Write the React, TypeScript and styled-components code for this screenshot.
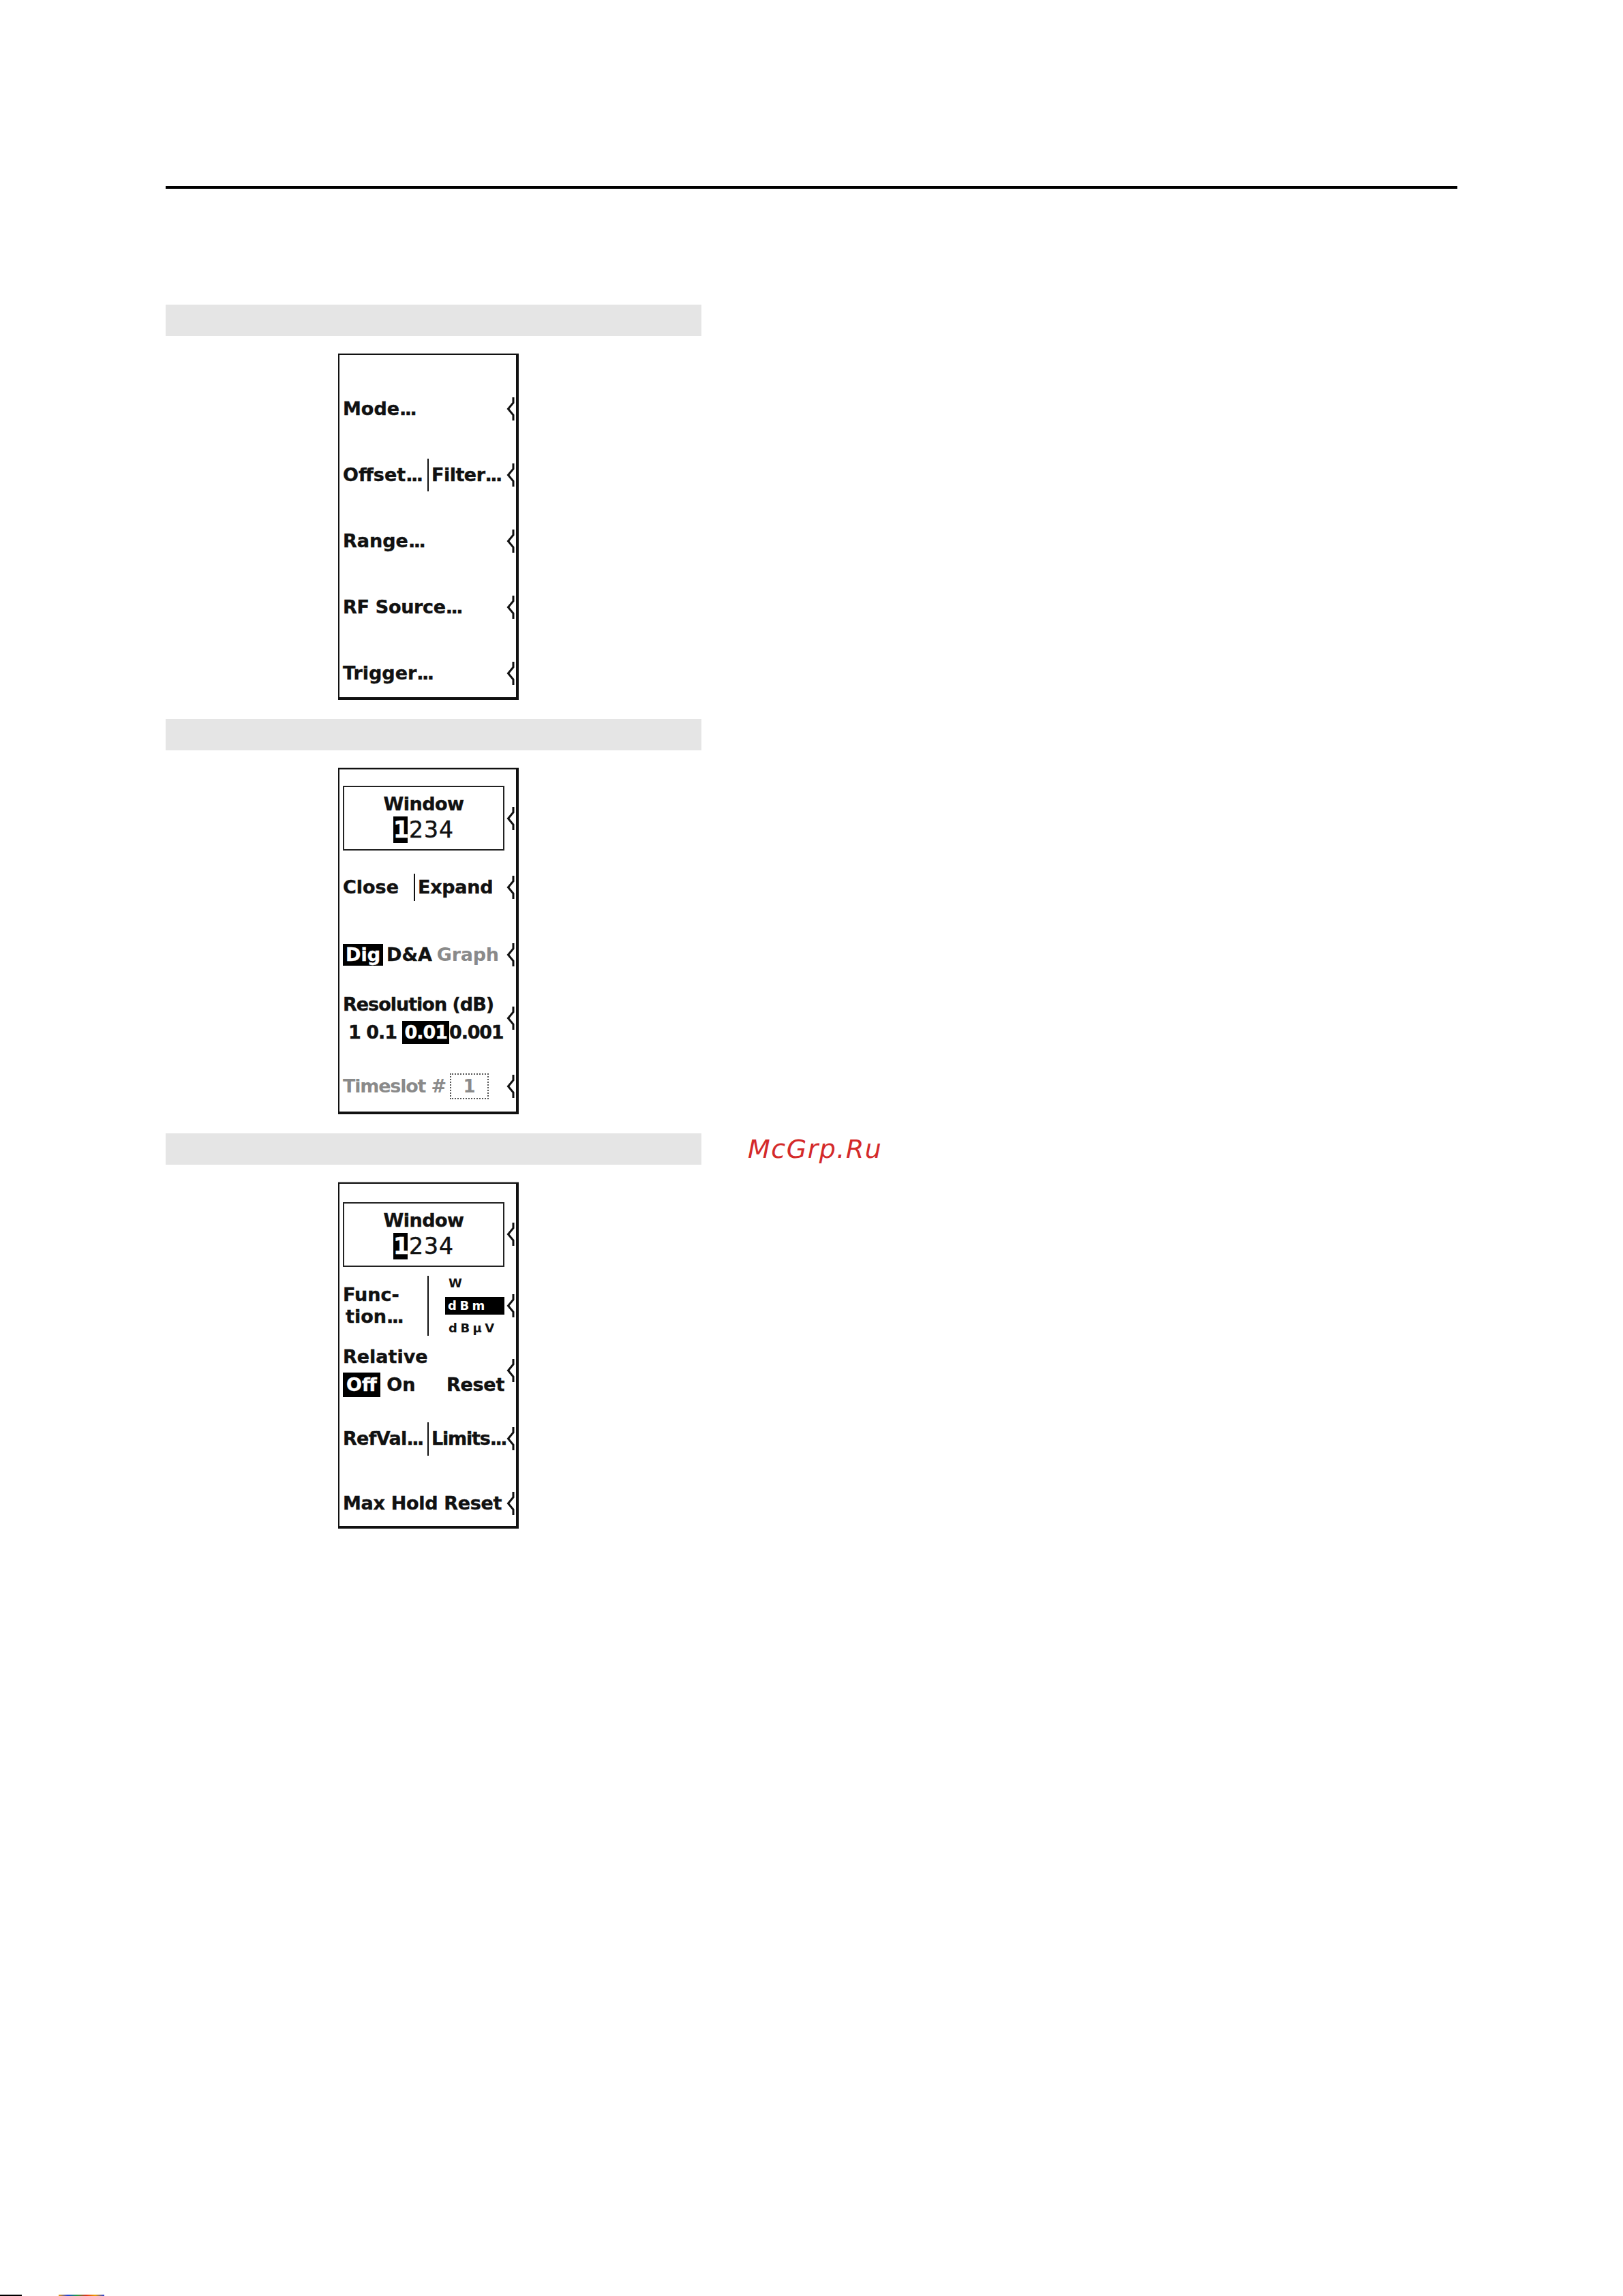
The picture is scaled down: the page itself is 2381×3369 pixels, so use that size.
import React from 'react';
import styled, { createGlobalStyle } from 'styled-components';

const GlobalStyle = createGlobalStyle`
  html, body {
    margin: 0;
    padding: 0;
    background: #fff;
  }
  body {
    font-family: 'DejaVu Sans', 'Liberation Sans', sans-serif;
    color: #111;
  }
`;

const Page = styled.div`
  width: 2381px;
  height: 3369px;
  box-sizing: border-box;
  padding: 273px 0 0 243px;
  display: flex;
  flex-direction: column;
  overflow: hidden;
`;

const TopRule = styled.div`
  width: 1895px;
  height: 4px;
  background: #000;
  margin-bottom: 170px;
`;

const Section = styled.section`
  display: flex;
  flex-direction: column;
  gap: 26px;
  margin-bottom: 28px;
`;

const SectionHead = styled.div`
  display: flex;
  align-items: center;
  height: 46px;
`;

const HeadBar = styled.div`
  width: 786px;
  height: 46px;
  background: #e5e5e5;
`;

const Watermark = styled.span`
  margin-left: 68px;
  font-family: 'DejaVu Sans', sans-serif;
  font-style: oblique;
  font-size: 38px;
  letter-spacing: 1.5px;
  color: #d42a2a;
`;

const Panel = styled.div<{ $top: number }>`
  width: 265px;
  height: 508px;
  box-sizing: border-box;
  margin-left: 253px;
  border: 2px solid #111;
  border-right-width: 4px;
  border-bottom-width: 4px;
  box-shadow: 0 -1px 0 #bbb;
  padding: ${(p) => p.$top}px 2px 0 5px;
  display: flex;
  flex-direction: column;
`;

const Slot = styled.div<{ $h: number }>`
  height: ${(p) => p.$h}px;
  flex: none;
  display: flex;
  align-items: center;
`;

const SlotBody = styled.div`
  width: 237px;
  flex: none;
  display: flex;
  align-items: center;
`;

const ArrowSvg = styled.svg`
  flex: none;
  margin-left: 3px;
  display: block;
`;

const Label = styled.span<{ $ls?: number; $lh?: number }>`
  font-weight: bold;
  font-size: 27px;
  line-height: ${(p) => p.$lh ?? 30}px;
  white-space: nowrap;
  letter-spacing: ${(p) => p.$ls ?? 0}px;
  -webkit-text-stroke: 0.4px currentColor;
`;

const Dots = styled.span`
  letter-spacing: -2.5px;
`;

const Dim = styled(Label)`
  color: #8a8a8a;
  -webkit-text-stroke: 0;
`;

const Inv = styled.span<{ $px?: number; $h?: number }>`
  display: inline-block;
  background: #000;
  color: #fff;
  padding: 0 ${(p) => p.$px ?? 4}px;
  height: ${(p) => p.$h ?? 30}px;
  line-height: ${(p) => p.$h ?? 30}px;
`;

const Split = styled.div`
  display: flex;
  align-items: center;
  width: 100%;
`;

const Cell = styled.div<{ $w?: number }>`
  ${(p) => (p.$w ? `width: ${p.$w}px; flex: none;` : 'flex: 1;')}
  display: flex;
  align-items: center;
`;

const Divider = styled.div<{ $h: number }>`
  width: 2px;
  height: ${(p) => p.$h}px;
  background: #111;
  flex: none;
  margin-right: 4px;
`;

const WinBox = styled.div`
  width: 237px;
  height: 95px;
  box-sizing: border-box;
  border: 2px solid #222;
  padding-top: 4px;
  display: flex;
  flex-direction: column;
  align-items: center;
  justify-content: center;
  gap: 6px;
`;

const WinDigits = styled.div`
  display: flex;
  align-items: center;
  font-size: 33px;
  line-height: 39px;
  letter-spacing: 1px;
  -webkit-text-stroke: 0.5px currentColor;
`;

const WinSel = styled.span`
  display: inline-block;
  width: 21px;
  height: 39px;
  background: #000;
  color: #fff;
  font-weight: bold;
  text-align: center;
  letter-spacing: 0;
  margin-right: 2px;
`;

const Gap = styled.span<{ $w: number }>`
  display: inline-block;
  width: ${(p) => p.$w}px;
`;

const DotBox = styled.span`
  display: inline-flex;
  align-items: center;
  justify-content: center;
  width: 57px;
  height: 38px;
  box-sizing: border-box;
  border: 2px dotted #555;
  margin-left: 6px;
  font-weight: bold;
  font-size: 26px;
  color: #8a8a8a;
`;

const Stack = styled.div`
  display: flex;
  flex-direction: column;
  width: 100%;
`;

const Line = styled.div<{ $indent?: number; $h: number }>`
  display: flex;
  align-items: center;
  height: ${(p) => p.$h}px;
  padding-left: ${(p) => p.$indent ?? 0}px;
`;

const Spread = styled(Line)`
  justify-content: space-between;
`;

const UnitCol = styled.div`
  display: flex;
  flex-direction: column;
  align-items: flex-start;
  gap: 10px;
  padding-left: 20px;
`;

const Unit = styled.span<{ $inv?: boolean }>`
  font-weight: bold;
  font-size: 18px;
  letter-spacing: 4.5px;
  line-height: ${(p) => (p.$inv ? 26 : 20)}px;
  padding-left: ${(p) => (p.$inv ? 4 : 5)}px;
  ${(p) => (p.$inv ? 'background:#000;color:#fff;width:87px;box-sizing:border-box;' : '')}
`;

const Footer = styled.div`
  margin-top: auto;
  margin-left: -243px;
  height: 2px;
  display: flex;
  gap: 54px;
`;

const FootBit = styled.span<{ $w: number; $bg: string }>`
  width: ${(p) => p.$w}px;
  background: ${(p) => p.$bg};
`;

const Arrow = () => (
  <ArrowSvg viewBox="0 0 12 36" width={12} height={36}>
    <path d="M10 1 V9 L2.5 18 L10 27 V35" fill="none" stroke="#111" strokeWidth={3} />
  </ArrowSvg>
);

const Key = ({ h, children }: { h: number; children: React.ReactNode }) => (
  <Slot $h={h}>
    <SlotBody>{children}</SlotBody>
    <Arrow />
  </Slot>
);

const WindowKey = ({ h }: { h: number }) => (
  <Key h={h}>
    <WinBox>
      <Label $lh={24} $ls={-0.5}>
        Window
      </Label>
      <WinDigits>
        <WinSel>1</WinSel>234
      </WinDigits>
    </WinBox>
  </Key>
);

const App = () => {
  return (
    <>
      <GlobalStyle />
      <Page>
        <TopRule />

        <Section>
          <SectionHead>
            <HeadBar />
          </SectionHead>
          <Panel $top={30}>
            <Key h={97}>
              <Label>
                Mode<Dots>...</Dots>
              </Label>
            </Key>
            <Key h={97}>
              <Split>
                <Cell $w={124}>
                  <Label>
                    Offset<Dots>...</Dots>
                  </Label>
                </Cell>
                <Divider $h={48} />
                <Cell>
                  <Label $ls={-0.5}>
                    Filter<Dots>...</Dots>
                  </Label>
                </Cell>
              </Split>
            </Key>
            <Key h={97}>
              <Label>
                Range<Dots>...</Dots>
              </Label>
            </Key>
            <Key h={97}>
              <Label $ls={-0.3}>
                RF Source<Dots>...</Dots>
              </Label>
            </Key>
            <Key h={97}>
              <Label>
                Trigger<Dots>...</Dots>
              </Label>
            </Key>
          </Panel>
        </Section>

        <Section>
          <SectionHead>
            <HeadBar />
          </SectionHead>
          <Panel $top={22}>
            <WindowKey h={99} />
            <Key h={104}>
              <Split>
                <Cell $w={104}>
                  <Label>Close</Label>
                </Cell>
                <Divider $h={40} />
                <Cell>
                  <Label $ls={-0.3}>Expand</Label>
                </Cell>
              </Split>
            </Key>
            <Key h={94}>
              <Label>
                <Inv $px={4} $h={32}>Dig</Inv>
              </Label>
              <Gap $w={5} />
              <Label>D&amp;A</Label>
              <Gap $w={7} />
              <Dim $ls={-0.3}>Graph</Dim>
            </Key>
            <Key h={92}>
              <Stack>
                <Line $h={41}>
                  <Label $ls={-1}>Resolution (dB)</Label>
                </Line>
                <Line $h={41} $indent={8}>
                  <Label $ls={-1}>1 0.1&nbsp;</Label>
                  <Label $ls={-1}>
                    <Inv $px={3} $h={34}>0.01</Inv>
                  </Label>
                  <Label $ls={-1.2}>0.001</Label>
                </Line>
              </Stack>
            </Key>
            <Key h={108}>
              <Dim $ls={-1.2}>Timeslot #</Dim>
              <DotBox>1</DotBox>
            </Key>
          </Panel>
        </Section>

        <Section>
          <SectionHead>
            <HeadBar />
            <Watermark>McGrp.Ru</Watermark>
          </SectionHead>
          <Panel $top={25}>
            <WindowKey h={98} />
            <Key h={112}>
              <Split>
                <Cell $w={124}>
                  <Stack>
                    <Line $h={32}>
                      <Label>Func-</Label>
                    </Line>
                    <Line $h={32} $indent={4}>
                      <Label>
                        tion<Dots>...</Dots>
                      </Label>
                    </Line>
                  </Stack>
                </Cell>
                <Divider $h={88} />
                <Cell>
                  <UnitCol>
                    <Unit>W</Unit>
                    <Unit $inv>dBm</Unit>
                    <Unit>dBµV</Unit>
                  </UnitCol>
                </Cell>
              </Split>
            </Key>
            <Key h={78}>
              <Stack>
                <Line $h={41}>
                  <Label>Relative</Label>
                </Line>
                <Spread $h={41}>
                  <Line $h={41}>
                    <Label>
                      <Inv $px={5} $h={36}>Off</Inv>
                    </Label>
                    <Label>&nbsp;On</Label>
                  </Line>
                  <Label $ls={-0.3}>Reset</Label>
                </Spread>
              </Stack>
            </Key>
            <Key h={122}>
              <Split>
                <Cell $w={124}>
                  <Label $ls={-0.7}>
                    RefVal<Dots>...</Dots>
                  </Label>
                </Cell>
                <Divider $h={49} />
                <Cell>
                  <Label $ls={-1.2}>
                    Limits<Dots>...</Dots>
                  </Label>
                </Cell>
              </Split>
            </Key>
            <Key h={68}>
              <Label $ls={-0.3}>Max Hold Reset</Label>
            </Key>
          </Panel>
        </Section>

        <Footer>
          <FootBit $w={32} $bg="#000" />
          <FootBit $w={67} $bg="linear-gradient(90deg,#f0a000,#2040e0,#20a040,#e03020,#f0a000,#2040e0)" />
        </Footer>
      </Page>
    </>
  );
};

export default App;
